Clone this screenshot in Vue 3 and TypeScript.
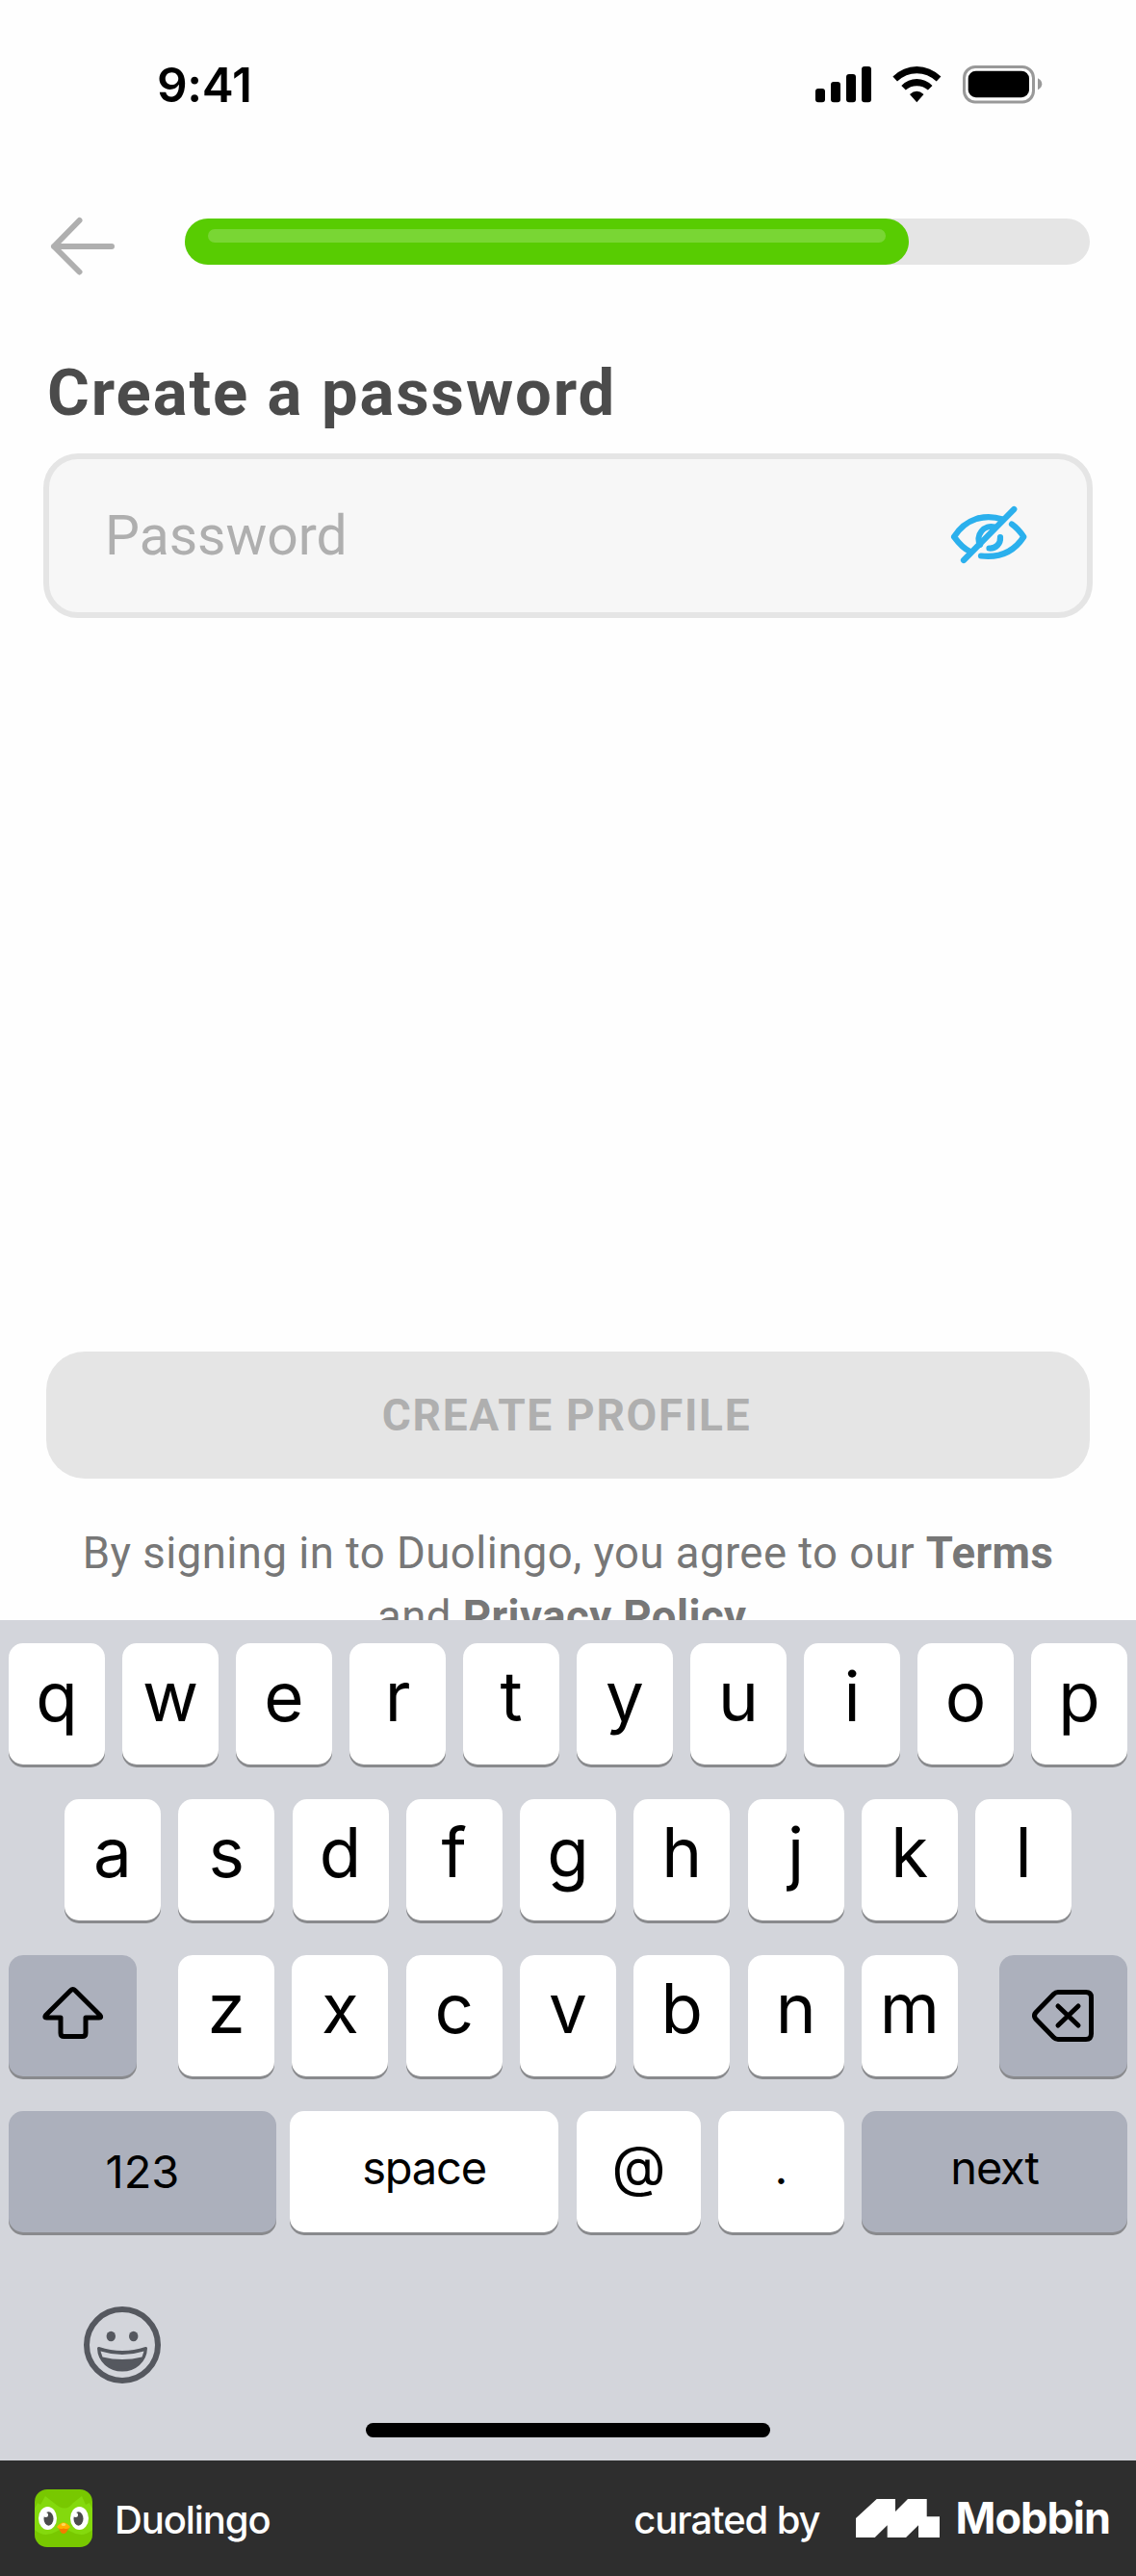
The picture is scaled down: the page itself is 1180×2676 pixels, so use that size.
<script setup lang="ts">
interface Key {
  label: string
  kind?: string
}

const progress = 80
const topRow: string[] = [...'qwertyuiop']
const homeRow: string[] = [...'asdfghjkl']
const lowerRow: string[] = [...'zxcvbnm']
const actions: Key[] = [
  { label: '123', kind: 'dark numbers' },
  { label: 'space', kind: 'space' },
  { label: '@', kind: 'at' },
  { label: '.', kind: 'dot' },
  { label: 'next', kind: 'dark next' },
]
</script>

<template>
  <div class="screen">
    <main class="app">
      <div class="status">
        <span class="time">9:41</span>
        <svg class="status-icons" width="236" height="40" viewBox="847 68 236 40">
          <rect x="847" y="92" width="10" height="14.3" rx="3" />
          <rect x="863" y="85" width="10" height="21.3" rx="3" />
          <rect x="879" y="77" width="10" height="29.3" rx="3" />
          <rect x="895" y="69" width="10" height="37.3" rx="3" />
          <path d="M927.4 79.6Q938.3 69 952.3 69T977.4 79.6L972.7 84.6Q963.7 76.3 952.3 76.3T932 84.6Z" />
          <path d="M936.3 88.9Q943.3 82 952.3 82T968.5 88.9L963.9 93.6Q959 89.2 952.3 89.2T940.8 93.6Z" />
          <path d="M945 98Q952.3 91.600 959.500 98L952.300 106.300Z" />
          <rect x="1001.500" y="69.500" width="72" height="36.500" rx="11.500" fill="none" stroke="#999" stroke-width="3" />
          <rect x="1005.700" y="73.700" width="63.300" height="27.500" rx="8" />
          <path d="M1078 81.300Q1082.300 83.500 1082.300 87.300T1078 93.300Z" fill="#999" />
        </svg>
      </div>

      <header class="nav">
        <svg class="back" width="68" height="62" viewBox="52 225 68 62" fill="none" stroke="#afafaf" stroke-width="6" stroke-linecap="round" stroke-linejoin="round">
          <path d="M82.500 229L56 256L82.500 282.500M56 256H116" />
        </svg>
        <div class="track">
          <div class="fill" :style="{ width: progress + '%' }"><div class="shine"></div></div>
        </div>
      </header>

      <h1>Create a password</h1>
      <div class="field">
        <span class="placeholder">Password</span>
        <svg class="eye" width="80" height="64" viewBox="987 524 80 64" fill="none" stroke="#2bb0ed" stroke-width="6.200" stroke-linecap="round" stroke-linejoin="round">
          <path d="M1053.300 528L1001 581" />
          <path d="M1041.500 538.500C1023 532.500 1003 537.500 991 556.700C996 563.500 1001 569 1007 571.500" />
          <path d="M1051 543.500C1056 547 1060 551.500 1063.300 556.700C1052 574 1036 578.500 1019 576.500" />
          <path d="M1033 546.500A13 13 0 0 0 1018 565" />
          <path d="M1039 557C1039.500 564 1034.500 569 1027.500 568.500" />
        </svg>
      </div>

      <div class="submit">CREATE PROFILE</div>
      <p class="legal">By signing in to Duolingo, you agree to our <b>Terms</b><br />and <b>Privacy Policy</b>.</p>
    </main>

    <section class="keyboard">
      <div class="row">
        <div v-for="k in topRow" :key="k" class="key">{{ k }}</div>
      </div>
      <div class="row home-row">
        <div v-for="k in homeRow" :key="k" class="key">{{ k }}</div>
      </div>
      <div class="row">
        <div class="key dark wide">
          <svg width="66" height="64" viewBox="42 2065 66 64" fill="none" stroke="#000" stroke-width="5" stroke-linejoin="round">
            <path d="M72.600 2070.500Q74.700 2068.300 76.800 2070.500L103 2096.500Q105 2099 102 2099H88V2115Q88 2118.500 84.500 2118.500H65.500Q62 2118.500 62 2115V2099H47.500Q44.500 2099 46.500 2096.500Z" />
          </svg>
        </div>
        <div class="letters">
          <div v-for="k in lowerRow" :key="k" class="key">{{ k }}</div>
        </div>
        <div class="key dark wide">
          <svg width="66" height="64" viewBox="1072 2062 66 64" fill="none" stroke="#000" stroke-width="5" stroke-linecap="round" stroke-linejoin="round">
            <path d="M1099 2069.500H1128Q1133.500 2069.500 1133.500 2075V2112.500Q1133.500 2118.500 1128 2118.500H1099Q1096.500 2118.500 1094.500 2116.500L1076 2097.500Q1073 2094 1076 2090.500L1094.500 2071.500Q1096.500 2069.500 1099 2069.500Z" />
            <path d="M1099 2084L1120 2104M1120 2084L1099 2104" />
          </svg>
        </div>
      </div>
      <div class="row actions">
        <div v-for="k in actions" :key="k.label" class="key" :class="k.kind">{{ k.label }}</div>
      </div>
      <svg class="emoji" width="82" height="82" viewBox="-41 -41 82 82">
        <circle r="37" fill="none" stroke="#55585f" stroke-width="6" />
        <ellipse cx="-11.700" cy="-9" rx="4.700" ry="5.300" fill="#55585f" />
        <ellipse cx="11.700" cy="-9" rx="4.700" ry="5.300" fill="#55585f" />
        <path d="M-24.500 3.500Q0 11.500 24.500 3.500C24 17 13 26 0 26S-24 17 -24.500 3.500Z" fill="#55585f" stroke="#55585f" stroke-width="3" stroke-linejoin="round" />
        <path d="M-22.500 6.500Q0 13.500 22.500 6.500L20.500 12.500Q0 17.500 -20.500 12.500Z" fill="#d3d5db" />
      </svg>
      <div class="home-indicator"></div>
    </section>

    <footer class="credit">
      <svg class="owl" width="60" height="60" viewBox="0 0 60 60">
        <rect width="60" height="60" rx="13" fill="#78c800" />
        <path d="M0 20L3 14L6 16L11 7L20 14Q32 25 40 14L49 7L53 16L57 14L60 20V42Q50 51 38 44L30 40L22 44Q10 51 0 42Z" fill="#84d90d" />
        <ellipse cx="13.500" cy="30" rx="9.500" ry="12" fill="#fff" />
        <ellipse cx="46.500" cy="30" rx="9.500" ry="12" fill="#fff" />
        <ellipse cx="14.500" cy="30.500" rx="5" ry="7.200" fill="#4b4b4b" />
        <ellipse cx="45.500" cy="30.500" rx="5" ry="7.200" fill="#4b4b4b" />
        <circle cx="11.500" cy="26.500" r="2.500" fill="#fff" />
        <circle cx="42.500" cy="26.500" r="2.500" fill="#fff" />
        <path d="M24 39L28 35.500Q30 34 32 35.500L36.500 39L32.500 45Q30 47 27.500 45Z" fill="#f47b00" />
        <path d="M23 39Q30 30 37 39Q35 42 30 40.500Q25 42 23 39Z" fill="#ffb100" />
        <ellipse cx="30" cy="36.500" rx="2.200" ry="1.500" fill="#ffd95a" />
      </svg>
      <span class="name">Duolingo</span>
      <span class="curated">curated by</span>
      <svg class="mark" width="87" height="40" viewBox="0 0 87 40" fill="#fff">
        <path d="M0 20L21.700 0H41V13L54 0H73.700V18.300H87V40H65V27.300L52 40H32.700V27.300L19.700 40H0Z" />
      </svg>
      <span class="brand">Mobbin</span>
    </footer>
  </div>
</template>

<style>
body {
  margin: 0;
  background: #fff;
}
</style>

<style scoped>
.screen {
  width: 1180px;
  height: 2676px;
  display: flex;
  flex-direction: column;
  background: #fefefe;
  font-family: Inter, sans-serif;
}
.app {
  height: 1683px;
  flex-shrink: 0;
  overflow: hidden;
  display: flex;
  flex-direction: column;
  font-family: Roboto, sans-serif;
}
.app > * {
  flex-shrink: 0;
}
.status {
  display: flex;
  box-sizing: border-box;
  height: 225px;
  padding: 58px 97px 0 163px;
  align-items: flex-start;
  justify-content: space-between;
}
.time {
  font: 600 49.5px/60px Inter, sans-serif;
  letter-spacing: -0.3px;
  color: #000;
}
.status-icons {
  margin-top: 10px;
}
.nav {
  display: flex;
  padding: 0 48px 0 52px;
  height: 62px;
}
.track {
  width: 940px;
  height: 48px;
  margin: 2px 0 0 72px;
  border-radius: 24px;
  background: #e5e5e5;
}
.fill {
  box-sizing: border-box;
  height: 48px;
  padding: 11px 24px 0;
  border-radius: 24px;
  background: #58cc02;
}
.shine {
  height: 14px;
  border-radius: 7px;
  background: #79d634;
}
h1 {
  margin: 81px 0 23px 49px;
  font-size: 67px;
  line-height: 80px;
  font-weight: 700;
  letter-spacing: 1.9px;
  color: #4b4b4b;
}
.field {
  display: flex;
  align-items: center;
  justify-content: space-between;
  box-sizing: border-box;
  height: 171px;
  margin: 0 45px;
  padding: 0 62px 0 58px;
  border: 6px solid #e5e5e5;
  border-radius: 36px;
  background: #f7f7f7;
}
.placeholder {
  font-size: 57px;
  letter-spacing: 0;
  color: #afafaf;
}
.submit {
  box-sizing: border-box;
  height: 132px;
  margin: 762px 48px 0;
  padding-right: 3px;
  border-radius: 40px;
  background: #e5e5e5;
  color: #afafaf;
  font-size: 46px;
  font-weight: 700;
  line-height: 132px;
  text-align: center;
  letter-spacing: 1.7px;
}
.legal {
  margin: 45px 0 0;
  font-size: 45.5px;
  line-height: 66px;
  text-align: center;
  white-space: nowrap;
  letter-spacing: 0.45px;
  color: #777;
}
.keyboard {
  box-sizing: border-box;
  height: 873px;
  padding: 24px 9px 0;
  background: #d3d5db;
  display: flex;
  flex-direction: column;
}
.row {
  display: flex;
  justify-content: space-between;
  height: 126px;
  margin-bottom: 36px;
}
.home-row {
  padding: 0 58px;
}
.letters {
  display: flex;
  justify-content: space-between;
  width: 810px;
}
.key {
  width: 100px;
  height: 126px;
  border-radius: 15px;
  background: #fff;
  box-shadow: 0 3px 0 #898a8d;
  color: #000;
  font-size: 71px;
  font-weight: 370;
  line-height: 110px;
  text-align: center;
}
.key.dark {
  background: #acb0bc;
}
.wide {
  width: 133px;
  display: flex;
  align-items: center;
  justify-content: center;
}
.actions {
  margin-bottom: 0;
  justify-content: flex-start;
}
.key.numbers,
.key.space,
.key.next {
  width: 278px;
  font-size: 47px;
  font-weight: 400;
  line-height: 118px;
}
.key.numbers {
  line-height: 126px;
}
.key.space {
  width: 279px;
  margin-left: 14px;
  letter-spacing: -1.2px;
}
.key.next {
  width: 276px;
  margin-left: 18px;
  letter-spacing: -1.2px;
}
.key.at {
  width: 129px;
  margin-left: 19px;
  font-size: 58px;
  font-weight: 400;
  line-height: 115px;
}
.key.dot {
  width: 131px;
  margin-left: 18px;
  font-size: 48px;
  line-height: 118px;
}
.emoji {
  margin: 76px 0 0 77px;
}
.home-indicator {
  width: 420px;
  height: 15px;
  margin: 40px auto 0;
  border-radius: 8px;
  background: #000;
}
.credit {
  height: 120px;
  box-sizing: border-box;
  padding: 0 27px 0 36px;
  display: flex;
  align-items: center;
  background: #2e2e2e;
  color: #fff;
}
.name,
.curated {
  font-size: 40px;
  font-weight: 500;
  letter-spacing: -1.1px;
  line-height: 50px;
  margin-top: 4px;
}
.name {
  margin-left: 23px;
}
.curated {
  margin-left: auto;
}
.mark {
  margin-left: 37px;
}
.brand {
  margin-left: 17px;
  font-size: 45px;
  font-weight: 700;
  line-height: 50px;
  letter-spacing: -1px;
}
</style>
